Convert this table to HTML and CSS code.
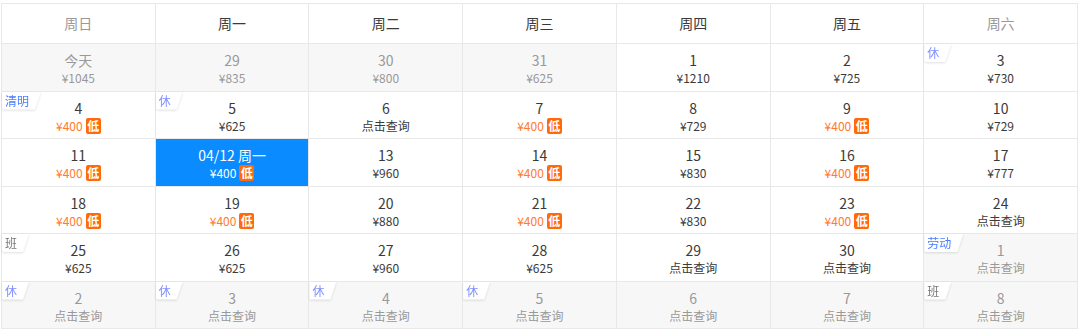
FILE: index.html
```html
<!DOCTYPE html>
<html lang="zh-CN">
<head>
<meta charset="utf-8">
<link rel="stylesheet" href="styles.css">
</head>
<body>
<div class="cal">
  <div class="hd weekend">周日</div>
  <div class="hd">周一</div>
  <div class="hd">周二</div>
  <div class="hd">周三</div>
  <div class="hd">周四</div>
  <div class="hd">周五</div>
  <div class="hd weekend">周六</div>

  <div class="cell off"><span class="num">今天</span><span class="price">¥1045</span></div>
  <div class="cell off"><span class="num">29</span><span class="price">¥835</span></div>
  <div class="cell off"><span class="num">30</span><span class="price">¥800</span></div>
  <div class="cell off"><span class="num">31</span><span class="price">¥625</span></div>
  <div class="cell"><span class="num">1</span><span class="price">¥1210</span></div>
  <div class="cell"><span class="num">2</span><span class="price">¥725</span></div>
  <div class="cell"><span class="tagw"><span class="tag rest">休</span></span><span class="num">3</span><span class="price">¥730</span></div>

  <div class="cell"><span class="tagw"><span class="tag fest">清明</span></span><span class="num">4</span><span class="price low">¥400<i class="lo">低</i></span></div>
  <div class="cell"><span class="tagw"><span class="tag rest">休</span></span><span class="num">5</span><span class="price">¥625</span></div>
  <div class="cell"><span class="num">6</span><span class="price">点击查询</span></div>
  <div class="cell"><span class="num">7</span><span class="price low">¥400<i class="lo">低</i></span></div>
  <div class="cell"><span class="num">8</span><span class="price">¥729</span></div>
  <div class="cell"><span class="num">9</span><span class="price low">¥400<i class="lo">低</i></span></div>
  <div class="cell"><span class="num">10</span><span class="price">¥729</span></div>

  <div class="cell"><span class="num">11</span><span class="price low">¥400<i class="lo">低</i></span></div>
  <div class="cell sel"><span class="num">04/12 周一</span><span class="price">¥400<i class="lo">低</i></span></div>
  <div class="cell"><span class="num">13</span><span class="price">¥960</span></div>
  <div class="cell"><span class="num">14</span><span class="price low">¥400<i class="lo">低</i></span></div>
  <div class="cell"><span class="num">15</span><span class="price">¥830</span></div>
  <div class="cell"><span class="num">16</span><span class="price low">¥400<i class="lo">低</i></span></div>
  <div class="cell"><span class="num">17</span><span class="price">¥777</span></div>

  <div class="cell"><span class="num">18</span><span class="price low">¥400<i class="lo">低</i></span></div>
  <div class="cell"><span class="num">19</span><span class="price low">¥400<i class="lo">低</i></span></div>
  <div class="cell"><span class="num">20</span><span class="price">¥880</span></div>
  <div class="cell"><span class="num">21</span><span class="price low">¥400<i class="lo">低</i></span></div>
  <div class="cell"><span class="num">22</span><span class="price">¥830</span></div>
  <div class="cell"><span class="num">23</span><span class="price low">¥400<i class="lo">低</i></span></div>
  <div class="cell"><span class="num">24</span><span class="price">点击查询</span></div>

  <div class="cell"><span class="tagw"><span class="tag work">班</span></span><span class="num">25</span><span class="price">¥625</span></div>
  <div class="cell"><span class="num">26</span><span class="price">¥625</span></div>
  <div class="cell"><span class="num">27</span><span class="price">¥960</span></div>
  <div class="cell"><span class="num">28</span><span class="price">¥625</span></div>
  <div class="cell"><span class="num">29</span><span class="price">点击查询</span></div>
  <div class="cell"><span class="num">30</span><span class="price">点击查询</span></div>
  <div class="cell off"><span class="tagw"><span class="tag fest">劳动</span></span><span class="num">1</span><span class="price">点击查询</span></div>

  <div class="cell off"><span class="tagw"><span class="tag rest">休</span></span><span class="num">2</span><span class="price">点击查询</span></div>
  <div class="cell off"><span class="tagw"><span class="tag rest">休</span></span><span class="num">3</span><span class="price">点击查询</span></div>
  <div class="cell off"><span class="tagw"><span class="tag rest">休</span></span><span class="num">4</span><span class="price">点击查询</span></div>
  <div class="cell off"><span class="tagw"><span class="tag rest">休</span></span><span class="num">5</span><span class="price">点击查询</span></div>
  <div class="cell off"><span class="num">6</span><span class="price">点击查询</span></div>
  <div class="cell off"><span class="num">7</span><span class="price">点击查询</span></div>
  <div class="cell off"><span class="tagw"><span class="tag work">班</span></span><span class="num">8</span><span class="price">点击查询</span></div>
</div>
</body>
</html>
```

FILE: styles.css
```css
html, body {
  margin: 0;
  padding: 0;
  background: #fff;
}
body {
  font-family: "Microsoft YaHei", "Noto Sans CJK SC", "Noto Sans", sans-serif;
  color: #333;
  padding: 3px 0 0 1px;
}
.cal {
  width: 1077px;
  box-sizing: border-box;
  display: grid;
  grid-template-columns: repeat(7, 1fr);
  grid-template-rows: 40px repeat(6, 47.5px);
  border-top: 1px solid #e8e8e8;
  border-left: 1px solid #e8e8e8;
}
.hd {
  box-sizing: border-box;
  border-right: 1px solid #e8e8e8;
  border-bottom: 1px solid #e8e8e8;
  display: flex;
  align-items: center;
  justify-content: center;
  font-size: 14px;
  color: #3a3a3a;
  padding-bottom: 1px;
}
.hd.weekend {
  color: #999;
}
.cell {
  position: relative;
  box-sizing: border-box;
  border-right: 1px solid #e8e8e8;
  border-bottom: 1px solid #e8e8e8;
  display: flex;
  flex-direction: column;
  align-items: center;
  padding-top: 7px;
  background: #fff;
}
.num {
  font-size: 14px;
  line-height: 18px;
  color: #3a3a3a;
}
.price {
  font-size: 12px;
  line-height: 18px;
  color: #3a3a3a;
  display: flex;
  align-items: center;
}
.price.low {
  color: #ff7a2e;
}
.lo {
  font-style: normal;
  display: inline-block;
  background: #ff6a0a;
  color: #fff;
  font-size: 12px;
  font-weight: bold;
  width: 15px;
  height: 16px;
  line-height: 16px;
  text-align: center;
  border-radius: 2px;
  margin-left: 3px;
}
.cell.off {
  background: #f7f7f7;
}
.cell.off .num,
.cell.off .price {
  color: #999;
}
.cell.sel {
  background: #0a8bff;
}
.cell.sel .num,
.cell.sel .price {
  color: #fff;
}
.tagw {
  position: absolute;
  top: 0;
  left: 0;
  filter: drop-shadow(0 1px 1px rgba(0, 0, 0, 0.12));
}
.tag {
  display: block;
  background: #fff;
  font-size: 12px;
  line-height: 17px;
  padding: 0 12px 1px 3px;
  clip-path: polygon(0 0, 100% 0, calc(100% - 6px) 100%, 0 100%);
  border-bottom-left-radius: 2px;
}
.tag.fest {
  color: #4a7dff;
}
.tag.rest {
  color: #7e8eff;
}
.tag.work {
  color: #777;
}
```
